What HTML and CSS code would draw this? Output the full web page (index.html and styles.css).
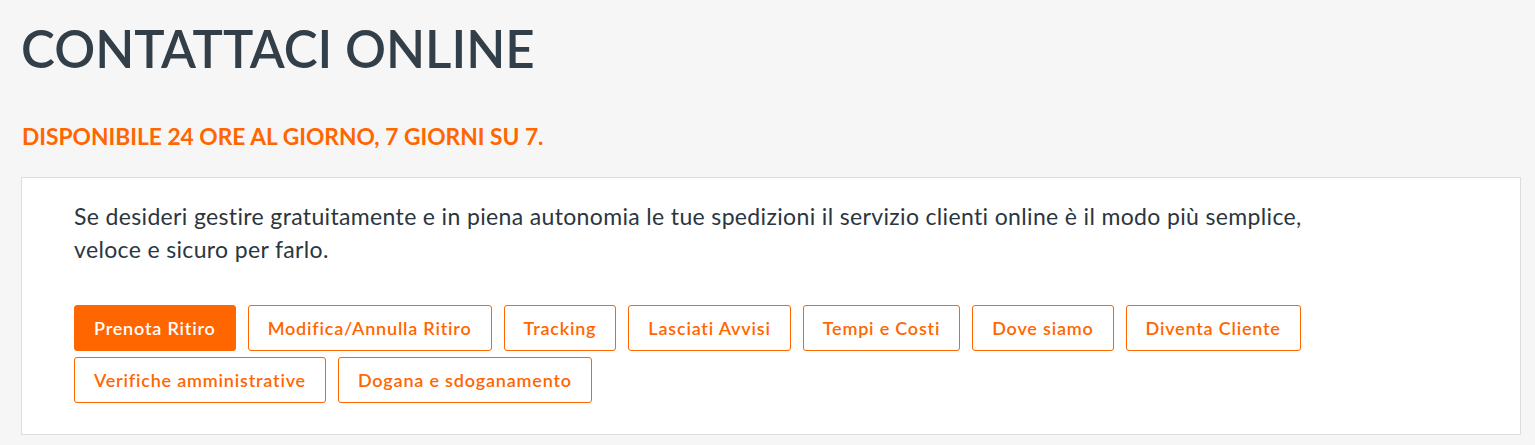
FILE: index.html
```html
<!DOCTYPE html>
<html lang="it">
<head>
<meta charset="utf-8">
<title>Contattaci online</title>
<link rel="stylesheet" href="styles.css">
</head>
<body>
<main class="page">
  <h1 class="title">CONTATTACI ONLINE</h1>
  <h2 class="subtitle">DISPONIBILE 24 ORE AL GIORNO, 7 GIORNI SU 7.</h2>
  <section class="card">
    <p class="intro">Se desideri gestire gratuitamente e in piena autonomia le tue spedizioni il servizio clienti online è il modo più semplice, veloce e sicuro per farlo.</p>
    <div class="actions">
      <a class="btn btn-primary" href="#">Prenota Ritiro</a>
      <a class="btn" href="#">Modifica/Annulla Ritiro</a>
      <a class="btn" href="#">Tracking</a>
      <a class="btn" href="#">Lasciati Avvisi</a>
      <a class="btn" href="#">Tempi e Costi</a>
      <a class="btn" href="#">Dove siamo</a>
      <a class="btn" href="#">Diventa Cliente</a>
      <a class="btn" href="#">Verifiche amministrative</a>
      <a class="btn" href="#">Dogana e sdoganamento</a>
    </div>
  </section>
</main>
</body>
</html>
```
FILE: styles.css
```css
html, body {
  margin: 0;
  padding: 0;
  background: #f6f6f6;
}
body {
  font-family: Lato, "Noto Sans", sans-serif;
  color: #333f48;
}
.page {
  padding: 19px 14px 0 21px;
}
.title {
  margin: 0;
  font-size: 51px;
  font-weight: 600;
  line-height: 60px;
  color: #333f48;
}
.subtitle {
  margin: 43px 0 0 1px;
  font-size: 22.75px;
  font-weight: 700;
  line-height: 30px;
  color: #ff6600;
}
.card {
  margin-top: 25px;
  background: #ffffff;
  border: 1px solid #dddddd;
  padding: 22px 52px 31px;
}
.intro {
  margin: 0;
  max-width: 1270px;
  font-size: 23px;
  line-height: 33px;
  letter-spacing: 0.35px;
  color: #2b3640;
}
.actions {
  margin-top: 39px;
  display: flex;
  flex-wrap: wrap;
  gap: 6px 12px;
  max-width: 1300px;
}
.btn {
  display: inline-flex;
  align-items: center;
  height: 46px;
  box-sizing: border-box;
  padding: 0 19px;
  border: 1px solid #ff6600;
  border-radius: 3px;
  background: #ffffff;
  color: #ff6600;
  font-size: 18px;
  font-weight: 600;
  letter-spacing: 0.8px;
  text-decoration: none;
}
.btn-primary {
  background: #ff6600;
  color: #ffffff;
}
```
